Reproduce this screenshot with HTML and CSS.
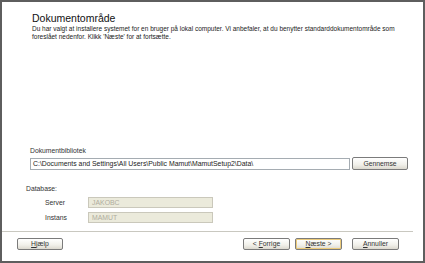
FILE: index.html
```html
<!DOCTYPE html>
<html lang="da">
<head>
    <meta charset="UTF-8" />
    <meta name="viewport" content="width=device-width, initial-scale=1.0"/>
    <title>Dokumentområde</title>
    <link rel="stylesheet" href="styles.css">
</head>
<body>
    <div class="window">
        <div class="header">
            <h1>Dokumentområde</h1>
            <p class="intro">Du har valgt at installere systemet for en bruger på lokal computer. Vi anbefaler, at du benytter standarddokumentområde som foreslået nedenfor. Klikk 'Næste' for at fortsætte.</p>
        </div>

        <div class="library">
            <div class="label">Dokumentbibliotek</div>
            <div class="path-row">
                <div class="field">C:\Documents and Settings\All Users\Public Mamut\MamutSetup2\Data\</div>
                <button class="btn btn-browse">Gennemse</button>
            </div>
        </div>

        <div class="database">
            <div class="label">Database:</div>
            <div class="db-row">
                <span class="db-label">Server</span>
                <div class="field field-disabled">JAKOBC</div>
            </div>
            <div class="db-row">
                <span class="db-label">Instans</span>
                <div class="field field-disabled">MAMUT</div>
            </div>
        </div>

        <div class="separator"></div>

        <div class="footer">
            <button class="btn btn-help"><u>H</u>jælp</button>
            <div class="nav">
                <button class="btn">&lt; <u>F</u>orrige</button>
                <button class="btn btn-default"><u>N</u>æste &gt;</button>
                <button class="btn btn-cancel"><u>A</u>nnuller</button>
            </div>
        </div>
    </div>
</body>
</html>
```

FILE: styles.css
```css
body {
    margin: 0;
    font-family: "Liberation Sans", Arial, sans-serif;
    background-color: #ffffff;
}
.window {
    width: 425px;
    height: 263px;
    box-sizing: border-box;
    border: 2px solid #5e5e5e;
    background-color: #ffffff;
    display: flex;
    flex-direction: column;
    color: #222;
}
.header {
    padding: 10px 0 0 30px;
}
h1 {
    margin: 0;
    font-size: 10.5px;
    line-height: 12px;
    font-weight: normal;
    color: #111;
}
.intro {
    margin: 1px 0 0;
    width: 370px;
    font-size: 6.5px;
    line-height: 8px;
}
.label {
    font-size: 6.8px;
    line-height: 8px;
    color: #333;
}
.library {
    margin: 106px 0 0 28px;
}
.library .label {
    margin-bottom: 2px;
}
.path-row {
    display: flex;
    align-items: center;
    gap: 2px;
}
.field {
    box-sizing: border-box;
    width: 320px;
    height: 12px;
    border: 1px solid #a5acb2;
    background-color: #fff;
    font-size: 6.9px;
    line-height: 10px;
    padding-left: 2px;
    white-space: nowrap;
    overflow: hidden;
}
.btn {
    box-sizing: border-box;
    width: 47px;
    height: 12px;
    padding: 0;
    border: 1px solid #7b7b7b;
    border-radius: 2px;
    background: linear-gradient(#ffffff, #f1f0ea 60%, #dcd9cf);
    font-family: "Liberation Sans", Arial, sans-serif;
    font-size: 6.8px;
    line-height: 10px;
    color: #333;
    text-align: center;
}
.btn u {
    text-decoration-thickness: 1px;
}
.btn-browse {
    width: 56px;
    height: 13px;
}
.database {
    margin: 15px 0 0 24px;
}
.database .label {
    margin-bottom: 4px;
}
.db-row {
    display: flex;
    align-items: center;
    margin-bottom: 4px;
}
.db-label {
    width: 43px;
    padding-left: 19px;
    font-size: 6.8px;
    color: #333;
}
.field-disabled {
    width: 125px;
    height: 11px;
    line-height: 9px;
    padding-left: 3px;
    background-color: #ebeadb;
    border-color: #cac8bb;
    color: #b0ad9e;
}
.separator {
    margin: 4px 10px 0 0;
    height: 1px;
    background-color: #c9c8c0;
}
.footer {
    display: flex;
    justify-content: space-between;
    margin-top: 6px;
    padding: 0 24px 0 15px;
}
.btn-help {
    width: 46px;
}
.nav {
    display: flex;
    gap: 5px;
}
.btn-default {
    box-shadow: inset 0 0 0 1px #eccb7a;
}
.btn-cancel {
    margin-left: 5px;
}
```
